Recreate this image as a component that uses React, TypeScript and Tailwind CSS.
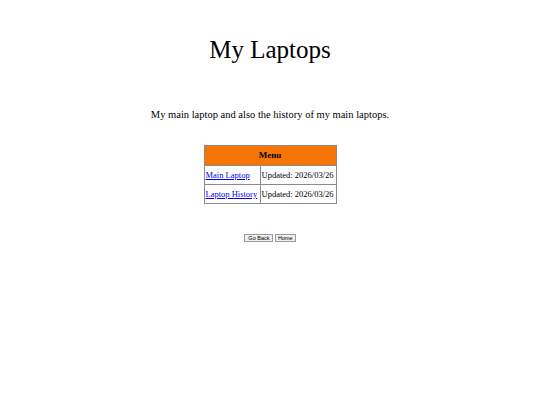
export default function App() {
    const rows = [
        { label: "Main Laptop", updated: "Updated: 2026/03/26" },
        { label: "Laptop History", updated: "Updated: 2026/03/26" },
    ]

    return (
        <div className="flex min-h-[405px] w-full flex-col items-center bg-white pt-[36px] font-['Liberation_Serif',serif] text-black">
            <h1 className="text-[25px] leading-[28px] font-normal">My Laptops</h1>

            <p className="mt-[45px] text-[10.5px] leading-[12px]">
                My main laptop and also the history of my main laptops.
            </p>

            {/* Menu table */}
            <table className="mt-[24px] w-[132px] table-fixed border-collapse text-[8.5px]">
                <colgroup>
                    <col className="w-[56px]" />
                    <col className="w-[76px]" />
                </colgroup>
                <thead>
                    <tr className="h-[20px]">
                        <th colSpan={2} className="border border-[#8a8a8a] bg-[#f67504] text-center text-[9px] font-bold">
                            Menu
                        </th>
                    </tr>
                </thead>
                <tbody>
                    {rows.map((row) => (
                        <tr key={row.label} className="h-[19px]">
                            <td className="border border-[#8a8a8a] px-[1px] whitespace-nowrap">
                                <a href="#" className="text-[#0000ee] underline">
                                    {row.label}
                                </a>
                            </td>
                            <td className="border border-[#8a8a8a] px-[1px] whitespace-nowrap">{row.updated}</td>
                        </tr>
                    ))}
                </tbody>
            </table>

            <div className="mt-[30px] flex gap-[1.5px] font-['Liberation_Sans',Arial,sans-serif]">
                <button className="h-[8px] border border-[#9a9a9a] bg-[#efefef] px-[3px] text-[5.5px] leading-[6px] text-black">
                    Go Back
                </button>
                <button className="h-[8px] border border-[#9a9a9a] bg-[#efefef] px-[2px] text-[5.5px] leading-[6px] text-black">
                    Home
                </button>
            </div>
        </div>
    )
}
